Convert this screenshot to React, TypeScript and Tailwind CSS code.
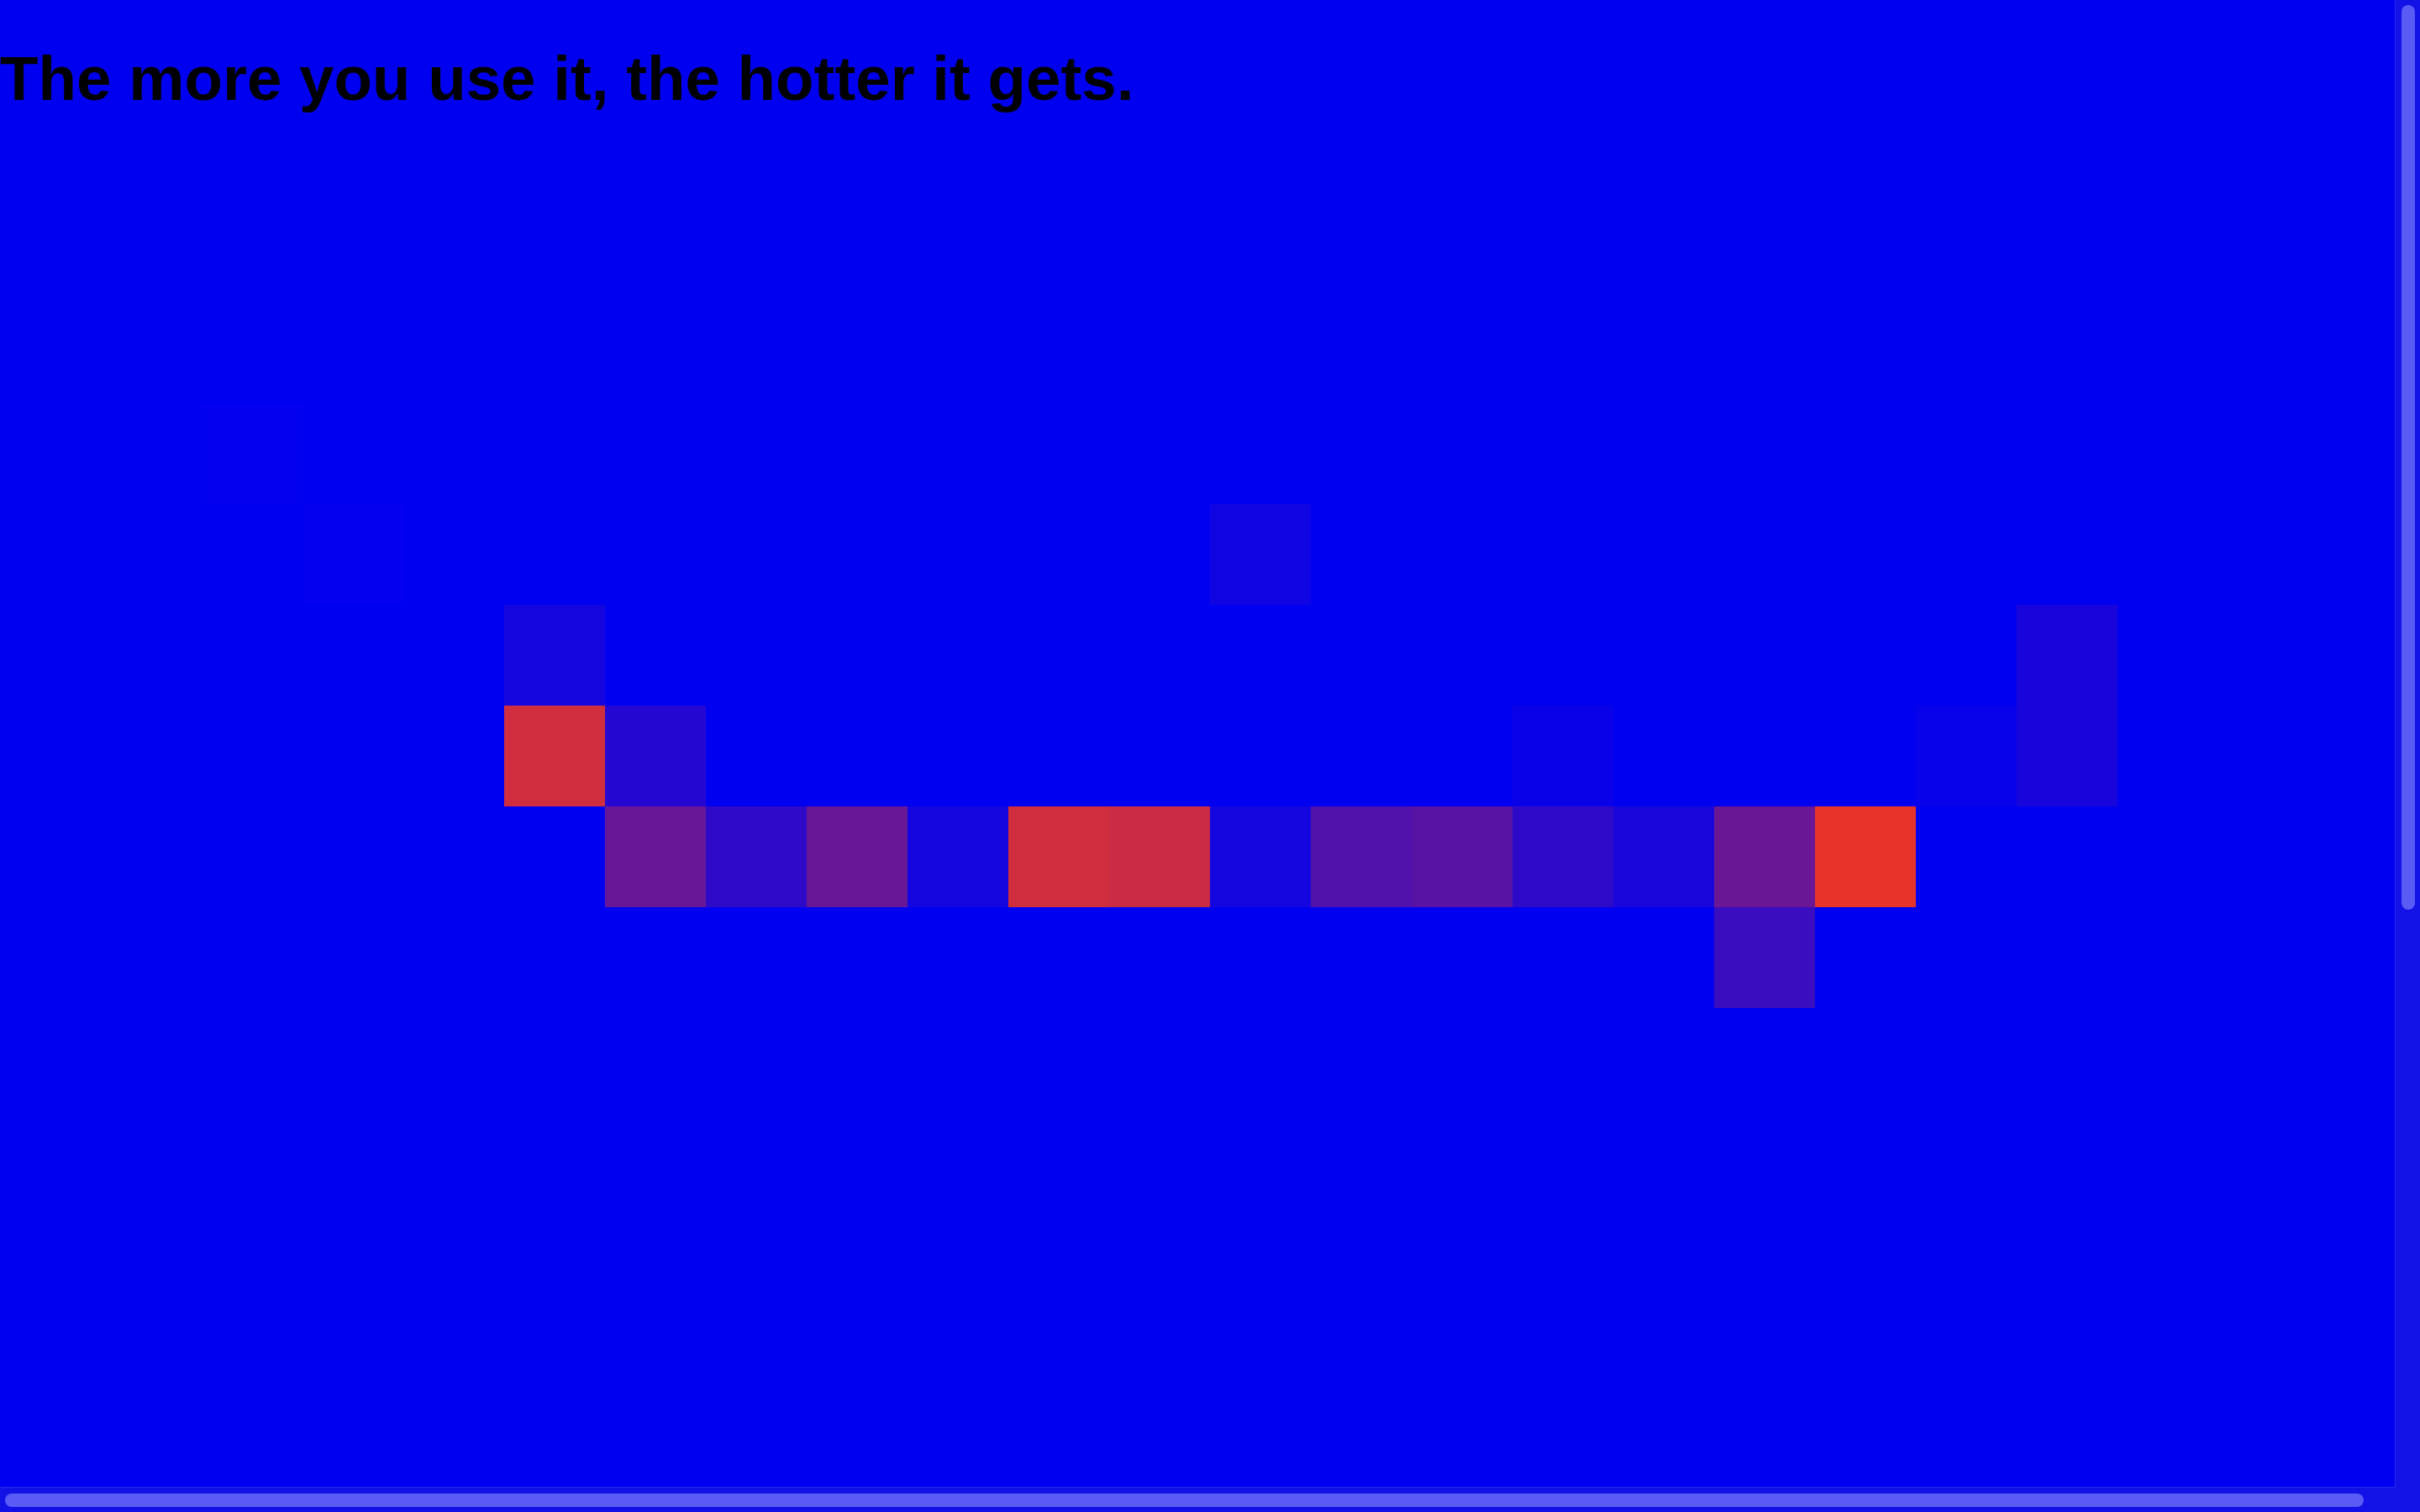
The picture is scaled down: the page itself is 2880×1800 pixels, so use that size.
const SIZE = 24;

// heat per cell, keyed "row-col"; everything else is cold
const heat: Record<string, number> = {
  '5-12': 0.07,
  '6-5': 0.09,
  '6-20': 0.1,
  '7-5': 0.9,
  '7-6': 0.155,
  '7-15': 0.04,
  '7-19': 0.03,
  '7-20': 0.1,
  '8-6': 0.45,
  '8-7': 0.2,
  '8-8': 0.45,
  '8-9': 0.09,
  '8-10': 0.9,
  '8-11': 0.87,
  '8-12': 0.09,
  '8-13': 0.35,
  '8-14': 0.38,
  '8-15': 0.2,
  '8-16': 0.11,
  '8-17': 0.46,
  '8-18': 1,
  '9-17': 0.25,
  // barely-there traces
  '4-2': 0.006,
  '5-3': 0.006,
};

function Cell({ row, col }: { row: number; col: number }) {
  const level = heat[`${row}-${col}`] ?? 0;
  return <div className="w-[120px] h-[120px] bg-[#e7332a]" style={{ opacity: level }} />;
}

export default function App() {
  const cells = [];
  for (let r = 0; r < SIZE; r++) {
    for (let c = 0; c < SIZE; c++) {
      cells.push(<Cell key={`${r}-${c}`} row={r} col={c} />);
    }
  }

  return (
    <div className="flex h-screen w-screen overflow-hidden bg-[#1212e6]">
      <div className="flex min-w-0 flex-1 flex-col">
        {/* viewport */}
        <div className="min-h-0 flex-1 overflow-hidden bg-[#0000f0] shadow-[1px_1px_0_#2a2aee]">
          <div className="relative w-[2880px] h-[2880px]">
            <div className="grid grid-cols-[repeat(24,120px)] grid-rows-[repeat(24,120px)]">{cells}</div>
            <h1 className="absolute left-0 top-[57px] m-0 font-['Liberation_Sans',Arial,sans-serif] font-bold text-[74.5px] leading-[74px] text-black whitespace-nowrap">
              The more you use it, the hotter it gets.
            </h1>
          </div>
        </div>
        {/* horizontal scrollbar */}
        <div className="h-[30px] shrink-0 pl-[6px] pr-[37px] pt-[8px] pb-[6px]">
          <div className="h-[16px] rounded-full bg-[#5a5af5]" />
        </div>
      </div>
      {/* vertical scrollbar */}
      <div className="w-[30px] shrink-0 pl-[8px] pr-[6px] pt-[6px]">
        <div className="w-[16px] h-[1077px] rounded-full bg-[#5a5af5]" />
      </div>
    </div>
  );
}
